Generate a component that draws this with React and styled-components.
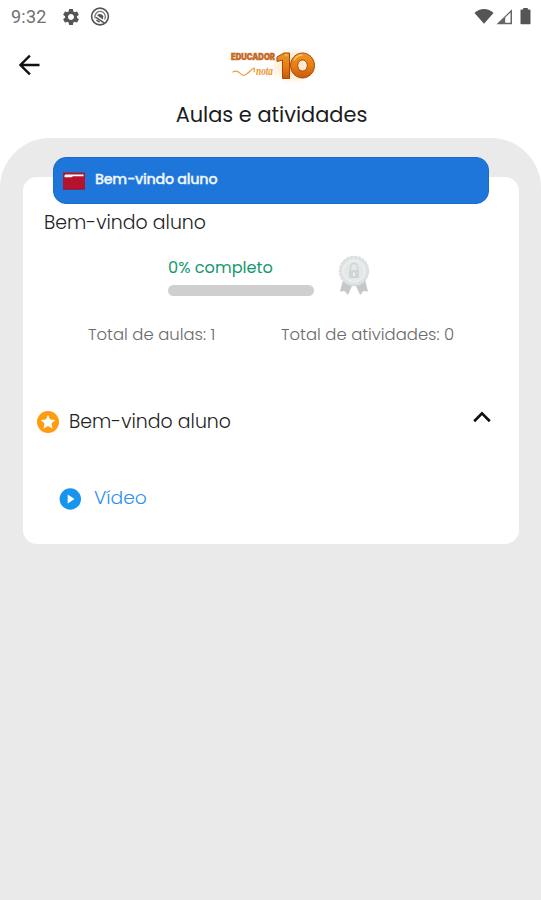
import React from 'react'
import styled, { createGlobalStyle } from 'styled-components';
import { MdSettings } from "react-icons/md";

const App = () => {
    return (
        <>
            <GlobalStyle />
            <Screen>
                <StatusBar>
                    <Clock>9:32</Clock>
                    <MdSettings size={20} color="#555" />
                    <DataSaverIcon />
                    <StatusRight>
                        <SignalIcons />
                    </StatusRight>
                </StatusBar>

                <AppBar>
                    <BackButton aria-label="Voltar">
                        <svg width="22" height="22" viewBox="0 0 22 22" fill="none" stroke="#111" strokeWidth="2.3">
                            <path d="M20.500 11H2M10.900 1.600L1.500 11l9.400 9.400" />
                        </svg>
                    </BackButton>
                    <Logo />
                </AppBar>

                <Title>Aulas e atividades</Title>

                <Body>
                    <Banner>
                        <FolderIcon />
                        <BannerText>Bem-vindo aluno</BannerText>
                    </Banner>

                    <Card>
                        <CourseName>Bem-vindo aluno</CourseName>

                        <Progress>
                            <div>
                                <ProgressLabel>0% completo</ProgressLabel>
                                <ProgressTrack />
                            </div>
                            <MedalIcon />
                        </Progress>

                        <Totals>
                            <Total>Total de aulas: 1</Total>
                            <Total>Total de atividades: 0</Total>
                        </Totals>

                        <ModuleRow>
                            <StarIcon />
                            <ModuleName>Bem-vindo aluno</ModuleName>
                            <Chevron width="18" height="12" viewBox="0 0 18 12" fill="none" stroke="#111" strokeWidth="2.7">
                                <path d="M1.2 10.2L9 2.4l7.8 7.8" />
                            </Chevron>
                        </ModuleRow>

                        <LessonRow>
                            <PlayIcon />
                            <LessonName>Vídeo</LessonName>
                        </LessonRow>
                    </Card>
                </Body>
            </Screen>
        </>
    )
}

const DataSaverIcon = () => (
    <svg width="20" height="20" viewBox="0 0 20 20" fill="none">
        <circle cx="10" cy="9.5" r="8.4" stroke="#555" strokeWidth="1.6" />
        <path d="M5.300 11.500A5.200 5.200 0 1 1 14.600 12.300" stroke="#777" strokeWidth="1.300" />
        <path d="M7.200 8.500C8.600 6.300 12.200 6.700 13.200 9.200L13 12.600z" fill="#555" />
        <path d="M6 10.400L14.500 16.200M6.400 13.200l3.200 2" stroke="#555" strokeWidth="1.500" />
    </svg>
);

const SignalIcons = () => (
    <svg width="58" height="18" viewBox="0 0 58 18">
        <path d="M.5 5C6-.2 14-.2 19.500 5L10 15.800z" fill="#555" />
        <path d="M22.500 16.200L38 1.200v15z" fill="#666" />
        <path d="M31.200 9.600L36.500 4.400v10.300h-5.300z" fill="#fff" />
        <path d="M49.200 0h4.600v1.600h1.700c.6 0 1 .4 1 1v12.600c0 .6-.4 1-1 1h-8c-.6 0-1-.4-1-1V2.600c0-.6.4-1 1-1h1.700z" fill="#555" />
    </svg>
);

const Logo = () => (
    <LogoSvg width="96" height="44" viewBox="0 0 96 44" role="img" aria-label="Educador nota 10">
        <defs>
            <radialGradient id="glow">
                <stop offset="0" stopColor="#ffd49a" stopOpacity=".8" />
                <stop offset=".6" stopColor="#ffe3bd" stopOpacity=".5" />
                <stop offset="1" stopColor="#fff" stopOpacity="0" />
            </radialGradient>
            <linearGradient id="gold" x1="0" y1="0" x2="0" y2="1">
                <stop offset="0" stopColor="#ee962a" />
                <stop offset=".55" stopColor="#e57c12" />
                <stop offset="1" stopColor="#c65a0b" />
            </linearGradient>
        </defs>
        <ellipse cx="68" cy="22" rx="27" ry="21" fill="url(#glow)" />
        <LogoWord x="6" y="15.5" textLength="44" lengthAdjust="spacingAndGlyphs">EDUCADOR</LogoWord>
        <path d="M7.500 28.200c3-2 5-1.500 7.500 1s4 3 7 .5c3-2.200 5-5 7-5.500 1.200.2-.8 3 .5 4" fill="none" stroke="#eda041" strokeWidth="1.200" />
        <LogoScript x="31" y="30.5" textLength="17" lengthAdjust="spacingAndGlyphs">nota</LogoScript>
        <g stroke="#a84708" strokeLinejoin="round">
            <path d="M52 13l7-4h5.500v25.500H57.500V16l-5.500 1.500z" fill="url(#gold)" strokeWidth="1" />
            <path fillRule="evenodd" d="M77.500 9a12 12.500 0 1 0 .01 0zM77.500 16a4.800 5.500 0 1 1-.01 0z" fill="url(#gold)" strokeWidth="1" />
        </g>
        <path d="M69 16.500c2-4 5-5.500 8.500-5.500M60 11h2.500" fill="none" stroke="#ffc568" strokeWidth="1.300" />
    </LogoSvg>
);

const FolderIcon = () => (
    <svg width="22" height="18" viewBox="0 0 22 18">
        <rect y=".5" width="22" height="17" rx=".5" fill="#b5122b" />
        <path d="M1.500 5.200V4c0-1 .6-1.500 1.500-1.500h17.500v1.700H10L8.500 5.200z" fill="#fff" />
        <path d="M0 17h22" stroke="#8c1535" />
    </svg>
);

const MedalIcon = () => (
    <svg width="32" height="42" viewBox="0 0 32 42">
        <path d="M5 26L2 37.500l4.500-.6L10 41l4-9h4l4.200 9 3.300-4.100 4.500.6L27 26z" fill="#c4c8c8" />
        <circle cx="16" cy="17" r="14.500" fill="#dfe3e3" stroke="#dadddd" strokeWidth="1.500" strokeDasharray="3 1" />
        <circle cx="16" cy="17" r="10.800" fill="#e4e8e8" stroke="#eff1f1" strokeWidth="1.200" />
        <path d="M12.500 16.500V13a3.500 3.500 0 0 1 7 0v3.500" fill="none" stroke="#d0d4d4" strokeWidth="1.600" />
        <rect x="11" y="16" width="10" height="8" rx="1.200" fill="#d0d4d4" />
        <path d="M16 18.500v3.500" stroke="#eef0f0" strokeWidth="2" />
    </svg>
);

const StarIcon = () => (
    <svg width="22" height="22" viewBox="0 0 22 22">
        <circle cx="11" cy="11" r="11" fill="#ff9b0d" />
        <path d="M11 3.600l2.150 4.900 5.250.5-3.950 3.500 1.150 5.200L11 15l-4.600 2.700 1.150-5.200L3.600 9l5.250-.5z" fill="#fff" />
    </svg>
);

const PlayIcon = () => (
    <svg width="22" height="22" viewBox="0 0 22 22">
        <circle cx="11.3" cy="11" r="10.700" fill="#1694ee" />
        <path d="M8.700 6.400v9.200l6.800-4.600z" fill="#fff" />
    </svg>
);

const GlobalStyle = createGlobalStyle`
    * {
        box-sizing: border-box;
    }

    body {
        margin: 0;
        background: #fff;
        font-family: Poppins, Inter, "Liberation Sans", sans-serif;
    }
`;

const Screen = styled.div`
    display: flex;
    flex-direction: column;
    height: 900px;
    overflow: hidden;
    background: #fff;
`;

const StatusBar = styled.header`
    display: flex;
    align-items: center;
    height: 33px;
    padding: 0 9px 0 11px;
    flex-shrink: 0;

    & svg {
        display: block;
    }

    & > svg + svg {
        margin-left: 9px;
    }
`;

const Clock = styled.span`
    width: 50px;
    font-family: Roboto, sans-serif;
    font-size: 18px;
    letter-spacing: .2px;
    color: #707070;
`;

const StatusRight = styled.div`
    margin-left: auto;
`;

const AppBar = styled.div`
    display: grid;
    grid-template-columns: 60px 1fr 60px;
    align-items: center;
    height: 65px;
    flex-shrink: 0;
`;

const BackButton = styled.button`
    display: flex;
    padding: 0 0 2px 19px;
    border: 0;
    background: none;
`;

const LogoSvg = styled.svg`
    justify-self: center;
    margin-left: 5px;
`;

const LogoWord = styled.text`
    font: 900 8.5px Inter, sans-serif;
    fill: #c6691f;
    stroke: #c6691f;
    stroke-width: .5px;
`;

const LogoScript = styled.text`
    font: italic 700 13px "Liberation Serif", serif;
    fill: #eb942e;
`;

const Title = styled.h1`
    height: 40px;
    margin: 0;
    padding-left: 2px;
    line-height: 34px;
    text-align: center;
    font-size: 20.9px;
    font-weight: 400;
    color: #1c1c1c;
    flex-shrink: 0;
`;

const Body = styled.main`
    flex: 1;
    padding: 19px 22px 0 23px;
    border-radius: 50px 50px 0 0;
    background: #eaeaea;
`;

const Banner = styled.div`
    position: relative;
    display: flex;
    align-items: center;
    gap: 10px;
    height: 47px;
    margin: 0 30px;
    padding: 0 9px;
    border-radius: 13px;
    background: #1e76db;
    border: 1px solid #196bd0;
`;

const BannerText = styled.span`
    padding-bottom: 3px;
    font-size: 14.3px;
    font-weight: 500;
    letter-spacing: -.25px;
    color: #f0f7ff;
    -webkit-text-stroke: .3px #f0f7ff;
`;

const Card = styled.section`
    height: 367px;
    margin-top: -27px;
    padding: 33px 0 0;
    border-radius: 14px;
    background: #fff;
`;

const CourseName = styled.h2`
    margin: 0 0 0 21px;
    line-height: 26px;
    font-size: 18.9px;
    font-weight: 300;
    color: #222;
`;

const Progress = styled.div`
    display: flex;
    gap: 24px;
    height: 87px;
    padding: 18px 0 0 145px;
`;

const ProgressLabel = styled.div`
    padding-top: 1px;
    line-height: 26px;
    font-size: 16.2px;
    color: #16996f;
`;

const ProgressTrack = styled.div`
    width: 146px;
    height: 11px;
    margin-top: 4px;
    border-radius: 6px;
    background: #cfcfcf;
`;

const Totals = styled.div`
    display: grid;
    grid-template-columns: 193px 1fr;
    padding-left: 65px;
`;

const Total = styled.span`
    line-height: 24px;
    font-size: 16.45px;
    font-weight: 300;
    color: #6b6b6b;
`;

const ModuleRow = styled.div`
    display: flex;
    align-items: center;
    height: 26px;
    margin-top: 62px;
    padding: 0 28px 0 14px;
`;

const ModuleName = styled.span`
    margin-left: 10px;
    padding-bottom: 2px;
    font-size: 18.9px;
    font-weight: 300;
    color: #222;
`;

const Chevron = styled.svg`
    margin: 0 0 11px auto;
`;

const LessonRow = styled.div`
    display: flex;
    align-items: center;
    height: 26px;
    margin-top: 51px;
    padding-left: 36px;
`;

const LessonName = styled.span`
    margin-left: 13px;
    padding-bottom: 4px;
    font-size: 18.7px;
    font-weight: 300;
    color: #2b91f0;
`;

export default App
